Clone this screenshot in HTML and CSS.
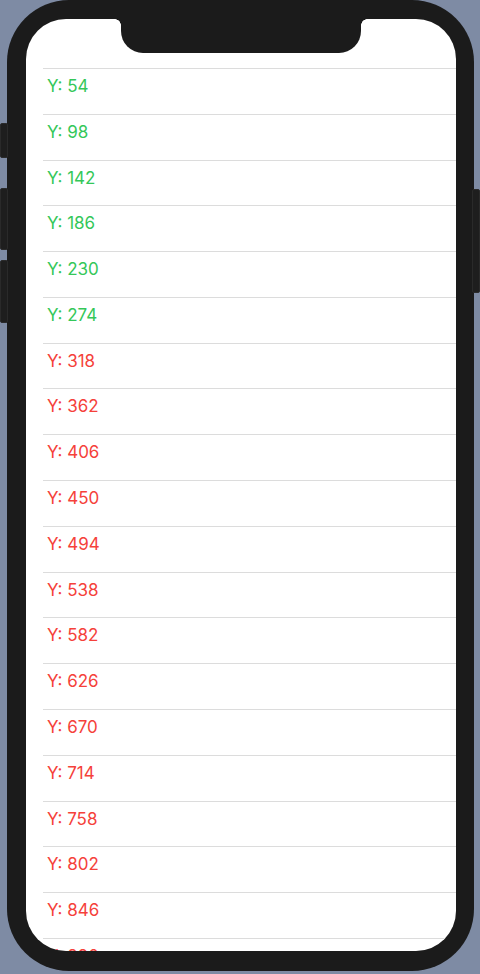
FILE: index.html
```html
<!DOCTYPE html>
<html lang="en">
<head>
<meta charset="utf-8">
<title>List</title>
<link rel="stylesheet" href="styles.css">
</head>
<body>
<div class="stage">
  <div class="btn btn-silent"></div>
  <div class="btn btn-vol-up"></div>
  <div class="btn btn-vol-down"></div>
  <div class="btn btn-power"></div>
  <div class="device">
    <div class="screen">
      <div class="notch"></div>
      <ul class="list">
        <li class="row up">Y: 54</li>
        <li class="row up">Y: 98</li>
        <li class="row up">Y: 142</li>
        <li class="row up">Y: 186</li>
        <li class="row up">Y: 230</li>
        <li class="row up">Y: 274</li>
        <li class="row down">Y: 318</li>
        <li class="row down">Y: 362</li>
        <li class="row down">Y: 406</li>
        <li class="row down">Y: 450</li>
        <li class="row down">Y: 494</li>
        <li class="row down">Y: 538</li>
        <li class="row down">Y: 582</li>
        <li class="row down">Y: 626</li>
        <li class="row down">Y: 670</li>
        <li class="row down">Y: 714</li>
        <li class="row down">Y: 758</li>
        <li class="row down">Y: 802</li>
        <li class="row down">Y: 846</li>
        <li class="row down">Y: 890</li>
      </ul>
    </div>
  </div>
</div>
</body>
</html>
```

FILE: styles.css
```css
* { box-sizing: border-box; }

html, body {
  margin: 0;
  padding: 0;
  background: #7e8ba4;
  width: 480px;
  height: 974px;
  overflow: hidden;
}

.stage {
  position: relative;
  width: 480px;
  height: 974px;
  padding-left: 7px;
}

.device {
  width: 467px;
  height: 971px;
  background: #1b1b1b;
  border-radius: 62px;
  padding: 19px 18px 20px 19px;
}

.screen {
  position: relative;
  width: 430px;
  height: 932px;
  background: #ffffff;
  border-radius: 40px;
  overflow: hidden;
  padding-top: 49px;
}

.notch {
  position: absolute;
  top: 0;
  left: 95px;
  width: 240px;
  height: 34px;
  background: #1b1b1b;
  border-radius: 0 0 22px 22px;
  z-index: 2;
}

.notch::before,
.notch::after {
  content: "";
  position: absolute;
  top: 0;
  width: 6px;
  height: 6px;
}
.notch::before {
  left: -6px;
  background: radial-gradient(circle at 0 100%, transparent 5.5px, #1b1b1b 6px);
}
.notch::after {
  right: -6px;
  background: radial-gradient(circle at 100% 100%, transparent 5.5px, #1b1b1b 6px);
}

.list {
  list-style: none;
  margin: 0 0 0 17px;
  padding: 0;
  border-top: 1px solid #dcdcdc;
}

.row {
  height: 45.79px;
  border-bottom: 1px solid #dcdcdc;
  padding: 7px 0 0 4px;
  font-family: Inter, "Liberation Sans", sans-serif;
  font-size: 17px;
  line-height: 20px;
}

.row.up { color: #34c759; }
.row.down { color: #f5413a; }

.btn {
  position: absolute;
  width: 8px;
  background: #1e1e1e;
  border: 1px solid #2a2a2a;
  border-radius: 2px;
}
.btn-silent { left: 0; top: 123px; height: 35px; }
.btn-vol-up { left: 0; top: 188px; height: 62px; }
.btn-vol-down { left: 0; top: 260px; height: 63px; }
.btn-power { left: 472px; top: 189px; height: 104px; }
```
